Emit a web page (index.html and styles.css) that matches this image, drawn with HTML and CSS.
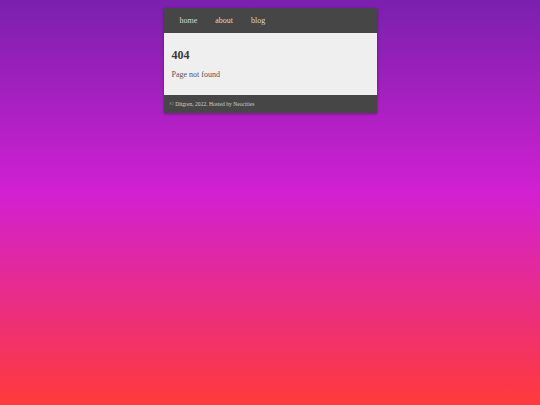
FILE: index.html
```html
<!DOCTYPE html>
<html>
<head>
<meta charset="utf-8">
<link rel="stylesheet" href="styles.css">
</head>
<body>
<div class="page">
  <div class="box">
    <nav class="nav">
      <a class="link" href="#">home</a>
      <a class="link" href="#">about</a>
      <a class="link" href="#">blog</a>
    </nav>
    <main class="content">
      <h2 class="title">404</h2>
      <p class="text">Page not found</p>
    </main>
    <footer class="foot">© Diigren, 2022. Hosted by Neocities</footer>
  </div>
</div>
</body>
</html>
```
FILE: styles.css
```css
html, body {
  margin: 0;
  padding: 0;
  height: 100%;
}
body {
  background: linear-gradient(to bottom, #7a20ae 0%, #d220d2 48%, #ff3a3a 100%);
  font-family: "Liberation Serif", "Times New Roman", serif;
}
.page {
  padding-top: 8px;
}
.box {
  width: 213px;
  margin: 0 auto;
  box-shadow: 0 1px 3px rgba(0, 0, 0, 0.35);
}
.nav {
  display: flex;
  align-items: center;
  height: 25px;
  padding-left: 7px;
  background: #464646;
}
.link {
  padding: 0 9px;
  font-size: 8px;
  color: #d8d8d8;
  text-decoration: none;
}
.content {
  display: block;
  background: #efefef;
  padding: 14.5px 8px 15px;
}
.title {
  margin: 0 0 8.5px;
  font-size: 12px;
  line-height: 14px;
  font-weight: bold;
  color: #3a3a3a;
}
.text {
  margin: 0;
  font-size: 8px;
  line-height: 10px;
  color: #555;
}
.foot {
  display: flex;
  align-items: center;
  height: 18px;
  padding-left: 6px;
  background: #464646;
  color: #cfcfcf;
  font-size: 5.6px;
}
```
